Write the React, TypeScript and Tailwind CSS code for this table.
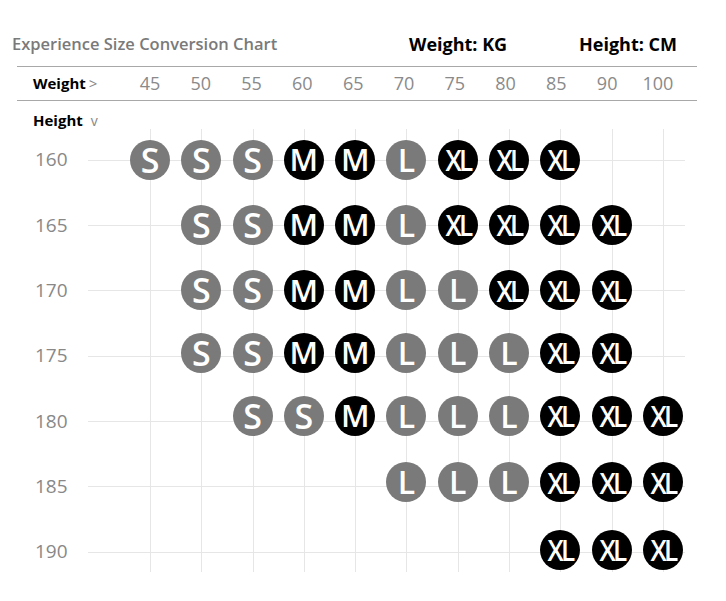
import React from "react";

type Size = "S" | "M" | "L" | "XL" | null;

const weights = ["45", "50", "55", "60", "65", "70", "75", "80", "85", "90", "100"];

const rows: { h: string; sizes: Size[]; dy: string }[] = [
  { h: "160", dy: "translate-y-0", sizes: ["S", "S", "S", "M", "M", "L", "XL", "XL", "XL", null, null] },
  { h: "165", dy: "translate-y-0", sizes: [null, "S", "S", "M", "M", "L", "XL", "XL", "XL", "XL", null] },
  { h: "170", dy: "translate-y-0", sizes: [null, "S", "S", "M", "M", "L", "L", "XL", "XL", "XL", null] },
  { h: "175", dy: "-translate-y-[3px]", sizes: [null, "S", "S", "M", "M", "L", "L", "L", "XL", "XL", null] },
  { h: "180", dy: "-translate-y-[5px]", sizes: [null, null, "S", "S", "M", "L", "L", "L", "XL", "XL", "XL"] },
  { h: "185", dy: "-translate-y-[4px]", sizes: [null, null, null, null, null, "L", "L", "L", "XL", "XL", "XL"] },
  { h: "190", dy: "-translate-y-[2px]", sizes: [null, null, null, null, null, null, null, null, "XL", "XL", "XL"] },
];

function Badge({ size, dy }: { size: Exclude<Size, null>; dy: string }) {
  const dark = size === "M" || size === "XL";
  const bg = dark ? "bg-black" : "bg-[#7a7a7a]";
  let text = "text-[34px]";
  if (size === "M") text = "text-[31px]";
  if (size === "L") text = "text-[32px]";
  if (size === "XL") text = "text-[29px] tracking-[-3px] scale-x-[0.9]";
  return (
    <div
      className={`relative z-10 flex h-[40px] w-[40px] items-center justify-center rounded-full ${bg} ${dy}`}
    >
      <span
        className={`block font-semibold leading-none text-white ${text}`}
        style={{ fontFamily: '"Open Sans", "Noto Sans", sans-serif' }}
      >
        {size}
      </span>
    </div>
  );
}

export default function App() {
  return (
    <div
      className="h-[601px] w-[726px] overflow-hidden bg-white"
      style={{ fontFamily: '"Open Sans", "Noto Sans", sans-serif' }}
    >
      {/* Title row */}
      <div className="mt-[33px] flex h-[22px] items-center">
        <div className="w-[409px] pl-[12px] text-[16.5px] font-semibold text-[#7a7a7a]">
          Experience Size Conversion Chart
        </div>
        <div className="w-[170px] text-[18px] font-bold text-black">Weight: KG</div>
        <div className="text-[18px] font-bold text-black">Height: CM</div>
      </div>

      {/* Weight header */}
      <div className="ml-[17px] mt-[11px] flex h-[35px] w-[680px] items-center border-y-[1.5px] border-[#a8a8a8]">
        <div className="flex w-[107.6px] items-center pl-[16px]">
          <span className="text-[15px] font-bold text-black">Weight</span>
          <span className="ml-[3px] text-[15px] text-[#888]">&gt;</span>
        </div>
        <div className="grid grid-cols-[repeat(11,50.8px)]">
          {weights.map((w) => (
            <div key={w} className="text-center text-[18px] text-[#8a8a8a]">
              {w}
            </div>
          ))}
        </div>
      </div>

      {/* Height label */}
      <div className="flex h-[29px] items-end pl-[33px]">
        <span className="text-[15px] font-bold leading-[20px] text-black">Height</span>
        <span className="ml-[8px] text-[14px] leading-[18px] text-[#888]">v</span>
      </div>

      {/* Chart rows */}
      <div className="-mt-[3px] flex flex-col">
        {rows.map((r, ri) => {
          const last = ri === rows.length - 1;
          const first = ri === 0;
          return (
            <div key={r.h} className="flex h-[65.33px]">
              <div className="flex w-[88px] items-center pl-[35px] text-[19px] text-[#888]">
                {r.h}
              </div>
              <div className="relative flex w-[601px]">
                <div className="absolute left-0 right-[4px] top-1/2 h-px bg-[#e6e6e6]" />
                <div className="w-[36.35px]" />
                {r.sizes.map((s, ci) => (
                  <div key={ci} className="relative flex w-[51.3px] items-center justify-center">
                    <div
                      className={`absolute left-1/2 w-px bg-[#e6e6e6] ${first ? "top-[2px]" : "top-0"} ${
                        last ? "bottom-[12px]" : "bottom-0"
                      }`}
                    />
                    {s && <Badge size={s} dy={r.dy} />}
                  </div>
                ))}
              </div>
            </div>
          );
        })}
      </div>
    </div>
  );
}
